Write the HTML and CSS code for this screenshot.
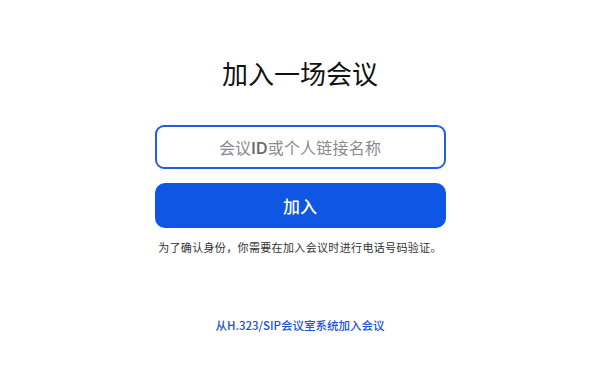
FILE: index.html
```html
<!DOCTYPE html>
<html lang="zh-CN">
<head>
<meta charset="utf-8">
<link rel="stylesheet" href="styles.css">
</head>
<body>
<main class="page">
  <h1 class="title">加入一场会议</h1>
  <div class="field"><span class="placeholder">会议<b class="id">ID</b>或个人链接名称</span></div>
  <button class="join">加入</button>
  <p class="note">为了确认身份，你需要在加入会议时进行电话号码验证。</p>
  <a class="link" href="#">从H.323/SIP会议室系统加入会议</a>
</main>
</body>
</html>
```
FILE: styles.css
```css
html, body {
  margin: 0;
  padding: 0;
  background: #ffffff;
}
body {
  font-family: "Noto Sans CJK SC", "Noto Sans", sans-serif;
  color: #222;
}
.page {
  width: 291px;
  margin: 0 auto;
  padding-top: 56px;
  display: flex;
  flex-direction: column;
  align-items: stretch;
}
.title {
  margin: 0;
  text-align: center;
  font-size: 26px;
  line-height: 34px;
  font-weight: 400;
  color: #111;
}
.field {
  margin-top: 35px;
  height: 44px;
  box-sizing: border-box;
  border: 2px solid #1f5fe6;
  border-radius: 9px;
  display: flex;
  align-items: center;
  justify-content: center;
}
.placeholder {
  font-size: 16px;
  color: #8a8a8f;
  letter-spacing: 0.2px;
}
.id {
  font-family: "Inter", "Noto Sans", sans-serif;
  font-weight: 600;
  color: #6a6a70;
}
.join {
  margin-top: 14px;
  height: 45px;
  border: none;
  border-radius: 10px;
  background: #0e56e3;
  color: #fff;
  font-family: "Noto Sans CJK SC", sans-serif;
  font-size: 17px;
  font-weight: 500;
  padding: 0;
}
.note {
  margin: 11px 0 0;
  font-size: 11px;
  line-height: 16px;
  letter-spacing: 0.35px;
  color: #333;
  text-align: center;
}
.link {
  margin-top: 62px;
  align-self: center;
  font-size: 11.5px;
  font-weight: 500;
  line-height: 16px;
  color: #2150dc;
  text-decoration: none;
}
```
